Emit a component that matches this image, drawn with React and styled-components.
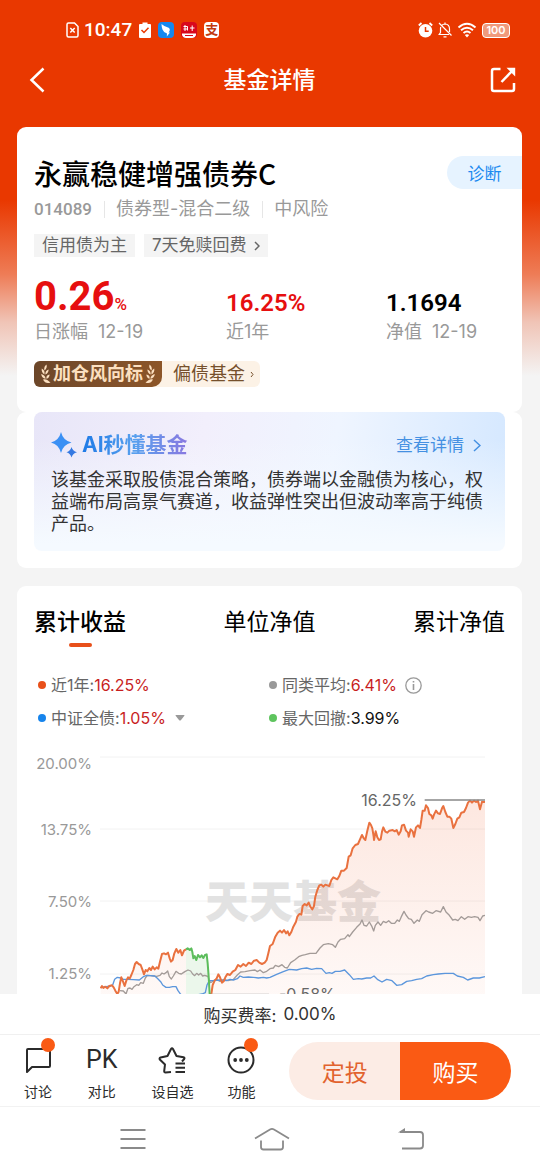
import React, { useState } from 'react';
import styled, { createGlobalStyle } from 'styled-components';

const GlobalStyle = createGlobalStyle`
  * {
    box-sizing: border-box;
  }

  body {
    margin: 0;
    background: #f4f4f4;
    color: #000;
    font-family: Inter, "Noto Sans CJK SC", sans-serif;
  }

  button {
    margin: 0;
    padding: 0;
    border: none;
    background: none;
    color: inherit;
    font: inherit;
    cursor: pointer;
  }

  svg {
    display: block;
    flex-shrink: 0;
  }
`;

const Screen = styled.div`
  height: 100vh;
  display: flex;
  flex-direction: column;
`;

const Scroller = styled.main`
  flex: 1;
  min-height: 0;
  overflow-y: auto;
  scrollbar-width: none;
  background: linear-gradient(#e93800 200px, #ee7c56 274px, #f0c4b6 322px, #f4f4f4 376px);
`;

const StatusBar = styled.div`
  height: 60px;
  padding: 0 30px 0 66px;
  display: flex;
  align-items: center;
  justify-content: space-between;
  color: #fff;
`;

const StatusGroup = styled.div`
  display: flex;
  align-items: center;
  gap: ${props => props.gap}px;
`;

const Clock = styled.span`
  font-family: Roboto, sans-serif;
  font-size: 19px;
  font-weight: 500;
  line-height: 24px;
`;

const AppBadge = styled.span`
  width: 15px;
  height: 16px;
  border-radius: 4px;
  background: #fff;
  color: #c23a10;
  font-size: 13px;
  font-weight: 700;
  line-height: 15px;
  text-align: center;
`;

const Battery = styled.span`
  width: 28px;
  height: 15px;
  border: 1px solid #fff;
  border-radius: 4px;
  background: #f09a7c;
  font-size: 11px;
  font-weight: 600;
  line-height: 13px;
  text-align: center;
`;

const NavBar = styled.header`
  height: 40px;
  padding: 0 24px 0 29px;
  display: flex;
  align-items: center;
  justify-content: space-between;
  color: #fff;
`;

const BackButton = styled.button`
  width: 20px;
`;

const NavTitle = styled.h1`
  margin: 0;
  font-size: 23px;
  font-weight: 500;
  line-height: 32px;
`;

const Content = styled.div`
  padding: 27px 18px 0 17px;
`;

const Card = styled.section`
  margin-bottom: ${props => props.spaced ? '18px' : '0'};
  padding: ${props => props.padding};
  border-radius: 9px;
  background: #fff;
`;

const TitleRow = styled.div`
  display: flex;
  align-items: center;
  justify-content: space-between;
`;

const FundName = styled.h2`
  margin: 0;
  font-family: "Noto Sans CJK SC", sans-serif;
  font-size: 28px;
  font-weight: 500;
  line-height: 32px;
`;

const DiagnoseButton = styled.button`
  width: 75px;
  height: 33px;
  margin-right: -17px;
  border-radius: 17px 0 0 17px;
  background: #e6f3ff;
  color: #1c8af0;
  font-size: 17px;
`;

const MetaRow = styled.div`
  margin-top: 8px;
  display: flex;
  align-items: center;
  color: #999;
  font-size: 18px;
  line-height: 24px;

  span + span {
    position: relative;
    margin-left: 24px;
  }

  span + span::before {
    content: '';
    position: absolute;
    left: -12px;
    top: 4px;
    width: 1px;
    height: 17px;
    background: #e6e6e6;
  }
`;

const FundCode = styled.span`
  font-family: Roboto, sans-serif;
  font-size: 17px;
  font-weight: 500;
`;

const TagRow = styled.div`
  margin-top: 13px;
  display: flex;
  gap: 9px;
`;

const Tag = styled.span`
  height: 23px;
  padding: 0 8px;
  display: flex;
  align-items: center;
  gap: 7px;
  background: #f4f4f4;
  color: #666;
  font-size: 17px;
  line-height: 23px;
`;

const Stats = styled.div`
  margin-top: 16px;
  display: grid;
  grid-template-columns: 192fr 160fr 119fr;
  align-items: end;
`;

const StatValue = styled.div`
  color: ${props => props.rising ? '#e60f0f' : '#000'};
  font-family: Roboto, sans-serif;
  font-size: ${props => props.large ? 40 : 24}px;
  font-weight: ${props => props.large ? 700 : 600};
  line-height: ${props => props.large ? 48 : 36}px;

  small {
    font-size: 17px;
    font-weight: 500;
    line-height: 17px;
  }
`;

const StatLabel = styled.div`
  display: flex;
  gap: 10px;
  color: #999;
  font-size: 18px;
  line-height: 22px;
  white-space: nowrap;
`;

const Indicator = styled.a`
  margin-top: 18px;
  display: inline-flex;
  border-radius: 6px;
  overflow: hidden;
  background: #fcf2e6;
  color: #76502c;
  font-size: 18px;
  line-height: 26px;
  text-decoration: none;
`;

const IndicatorName = styled.span`
  padding: 0 7px;
  display: flex;
  align-items: center;
  gap: 2px;
  border-radius: 0 0 10px 0;
  background: linear-gradient(100deg, #6b4629, #7d4f2b 50%, #8d5628);
  color: #fce0c0;
  font-weight: 700;
`;

const IndicatorValue = styled.span`
  padding: 0 6px 0 11px;
  display: flex;
  align-items: center;
  gap: 5px;
`;

const AiPanel = styled.div`
  padding: 19px 9px 16px 17px;
  border-radius: 8px;
  background:
    linear-gradient(to bottom, rgba(247, 251, 255, 0) 20%, #f5faff 95%),
    linear-gradient(100deg, #e8e6f8, #f2effc 35%, #eff5ff 62%, #d3e7ff);
`;

const AiHeader = styled.div`
  display: flex;
  align-items: center;
  justify-content: space-between;
`;

const AiTitle = styled.h3`
  margin: 0;
  display: flex;
  align-items: center;
  gap: 5px;
  font-size: 21px;
  font-weight: 700;
  line-height: 28px;

  span {
    background: linear-gradient(90deg, #1e7ae6, #58a0ee 50%, #8a78e0);
    background-clip: text;
    color: transparent;
  }
`;

const DetailLink = styled.a`
  margin-right: 15px;
  display: flex;
  align-items: center;
  gap: 9px;
  color: #4490e2;
  font-size: 17px;
  line-height: 24px;
  text-decoration: none;
`;

const AiText = styled.p`
  margin: 10px 0 0;
  color: #333;
  font-size: 18px;
  line-height: 22px;
`;

const Tabs = styled.div`
  display: flex;
  justify-content: space-between;
`;

const TabButton = styled.button`
  display: flex;
  flex-direction: column;
  align-items: center;
  font-size: 23px;
  font-weight: ${props => props.active ? 500 : 400};
  line-height: 32px;

  &::after {
    content: '';
    width: 23px;
    height: 4px;
    margin-top: 5px;
    border-radius: 2px;
    background: ${props => props.active ? '#e8501a' : 'transparent'};
  }
`;

const Legend = styled.div`
  margin: 26px 0 0 4px;
  display: grid;
  grid-template-columns: 231fr 236fr;
  row-gap: 9px;
`;

const LegendItem = styled.div`
  display: flex;
  align-items: center;
  color: #666;
  font-size: 16px;
  line-height: 24px;

  &::before {
    content: '';
    width: 8px;
    height: 8px;
    margin-right: 5px;
    border-radius: 50%;
    background: ${props => props.dot};
  }

  svg {
    margin-left: 8px;
  }
`;

const LegendValue = styled.span`
  color: ${props => props.rising ? '#c81e1e' : '#111'};
`;

const ChartSvg = styled.svg`
  width: 100%;
  height: auto;
  margin-top: 15px;
  font-family: Inter, "Noto Sans CJK SC", sans-serif;
`;

const Footer = styled.footer`
  background: #fff;
`;

const FeeRow = styled.div`
  height: 40px;
  display: flex;
  align-items: center;
  justify-content: center;
  gap: 7px;
  color: #333;
  font-size: 17px;
`;

const ActionBar = styled.div`
  height: 72px;
  padding: 0 29px 0 24px;
  display: flex;
  align-items: center;
  gap: 34px;
  border-top: 1px solid #f0f0f0;
`;

const ToolButton = styled.button`
  position: relative;
  padding-top: 6px;
  display: flex;
  flex-direction: column;
  align-items: center;
  gap: 8px;
  color: #2b2b2b;
  font-size: 14px;
  line-height: 20px;
  white-space: nowrap;
`;

const PkMark = styled.span`
  height: 28px;
  font-family: Roboto, sans-serif;
  font-size: 25px;
  line-height: 28px;
`;

const Dot = styled.i`
  position: absolute;
  top: -2px;
  right: -3px;
  width: 14px;
  height: 14px;
  border-radius: 50%;
  background: #fa5a14;
`;

const TradeButtons = styled.div`
  flex: 1;
  height: 58px;
  display: flex;
  border-radius: 29px;
  overflow: hidden;
`;

const TradeButton = styled.button`
  flex: 1;
  background: ${props => props.primary ? '#fa5a14' : '#fcece5'};
  color: ${props => props.primary ? '#fff' : '#e2622e'};
  font-size: 23px;
`;

const SystemNav = styled.nav`
  height: 64px;
  padding: 0 60px 0 64px;
  display: grid;
  grid-template-columns: repeat(3, 1fr);
  align-items: center;
  justify-items: center;
  border-top: 1px solid #f2f2f2;
`;

const Chevron = ({ width, height, stroke = 1.5 }) => (
  <svg width={width} height={height} viewBox={`0 0 ${width} ${height}`} fill="none" stroke="currentColor" strokeWidth={stroke}>
    <path d={`M1 1 L${width - 1} ${height / 2} L1 ${height - 1}`} />
  </svg>
);

const Laurel = ({ flip }) => (
  <svg width="10" height="20" viewBox="0 0 10 20" fill="#fce0c0">
    <g transform={flip ? 'translate(10 0) scale(-1 1)' : undefined}>
      <path d="M5.500 .5 Q2.500 2.500 3.400 6.500 Q6.600 4 5.500 .5Z" />
      <path d="M.8 4.500 Q0 8 3.400 10.500 Q4.400 6.500 .8 4.500Z" />
      <path d="M.2 10 Q.6 14 4.600 14.800 Q4.200 11 .2 10Z" />
      <path d="M2 15.500 Q5 14 9.500 18.500 Q4.500 20.500 2 15.500Z" />
      <path d="M7.600 5.500 Q4.200 6.500 4.300 10.500 Q7.600 9 7.600 5.500Z" />
      <path d="M8.600 10.500 Q5 11 5.400 14.800 Q8.600 14 8.600 10.500Z" />
    </g>
  </svg>
);

const RETURN_BEFORE = '302,745 306,738 310,744 316,740 322,745 328,738 336,736 341,742 346,752 352,762 356,755 360,730 364,712 368,722 374,738 379,722 384,712 389,716 394,705 400,690 405,672 410,666 416,672 422,675 427,688 432,703 437,690 442,694 448,684 453,690 458,680 464,688 470,682 475,686 480,665 486,642 492,640 498,643 504,638 509,655 513,665 518,660 523,640 529,627 535,638 541,630 546,646 552,632 558,628';
const DRAWDOWN = '558,628 563,625 569,630 574,625 577,636 580,655 584,648 589,660 594,645 600,652 605,646 610,654 615,645 620,643 623,670 626,710 629,762';
const RETURN_AFTER = '629,762 634,762 638,735 644,722 650,715 655,703 660,712 666,728 671,724 676,712 682,702 690,705 698,695 706,690 714,675 722,680 730,672 738,678 746,668 754,672 762,662 770,660 778,668 786,672 794,668 800,660 805,640 810,618 818,612 826,590 833,578 840,572 846,578 852,570 858,580 863,574 868,586 874,576 880,560 888,545 892,530 898,522 904,524 908,498 914,492 920,496 926,488 931,500 937,508 942,498 946,470 952,450 958,436 964,434 970,440 976,434 982,436 988,438 994,420 1000,412 1006,415 1012,418 1018,408 1024,392 1032,392 1040,384 1046,350 1052,346 1058,325 1066,315 1074,312 1080,298 1086,285 1092,296 1096,300 1102,272 1108,248 1113,255 1117,265 1121,290 1122,300 1127,274 1132,292 1137,300 1142,298 1146,275 1150,262 1156,275 1162,278 1168,272 1178,270 1184,274 1190,270 1196,284 1202,274 1206,256 1212,254 1218,272 1224,278 1226,290 1232,268 1238,274 1242,290 1248,262 1254,256 1260,264 1264,240 1268,212 1274,212 1278,196 1284,204 1288,222 1294,226 1298,236 1302,224 1308,212 1314,220 1320,222 1326,205 1330,198 1336,216 1342,230 1348,230 1354,236 1360,264 1366,252 1372,236 1378,232 1384,218 1392,216 1398,204 1404,188 1410,182 1416,188 1422,182 1428,186 1434,182 1440,208 1446,185 1455,186';
const PEERS = '360,752 370,753 378,762 384,745 390,744 396,748 402,740 410,734 416,736 422,728 430,730 436,714 442,706 450,707 460,708 470,709 480,706 486,699 492,702 498,698 503,693 508,710 514,717 520,708 528,694 536,700 544,702 550,698 556,694 564,690 572,693 578,702 584,707 590,700 596,705 602,700 608,708 614,706 620,708 624,709 627,720 632,728 640,722 650,718 660,724 672,718 684,722 700,718 712,705 722,696 735,695 750,692 765,690 772,695 780,690 790,698 800,694 810,686 820,684 826,676 836,680 846,674 854,682 862,684 872,668 884,660 896,650 906,646 916,644 930,640 948,640 960,624 970,614 985,611 998,614 1006,622 1014,606 1022,598 1034,596 1044,584 1048,590 1058,576 1070,562 1080,552 1086,540 1092,556 1100,558 1108,546 1116,560 1121,573 1126,556 1134,546 1142,556 1150,544 1158,548 1166,542 1174,550 1184,550 1192,540 1198,544 1204,530 1212,514 1218,525 1226,536 1234,538 1242,550 1252,540 1258,544 1266,524 1278,512 1286,516 1298,520 1308,512 1322,516 1330,500 1338,516 1348,526 1358,540 1366,538 1374,542 1384,530 1394,538 1404,530 1414,532 1424,530 1434,532 1440,542 1448,528 1455,526';
const BOND_INDEX = '302,742 318,740 332,738 338,735 344,718 352,712 362,714 370,718 382,718 400,719 418,720 430,710 440,706 452,707 464,708 472,715 482,725 488,735 498,742 508,742 518,740 528,740 534,752 542,763 560,780 590,765 606,762 616,758 621,735 628,722 640,722 660,720 680,722 690,718 700,720 712,716 720,708 730,712 745,711 760,712 775,714 790,712 800,714 810,712 830,703 850,695 868,688 890,690 905,686 920,684 935,688 950,685 965,686 978,700 988,698 996,700 1006,694 1020,694 1034,690 1048,704 1060,718 1075,716 1085,717 1100,714 1112,714 1122,708 1132,718 1146,726 1160,718 1176,722 1190,736 1205,734 1220,724 1235,722 1250,718 1265,716 1280,708 1300,704 1315,702 1335,700 1360,700 1372,708 1390,712 1403,720 1420,714 1438,714 1455,710';

const AXIS = [
  { label: '20.00%', line: 12, text: 24 },
  { label: '13.75%', line: 84, text: 90 },
  { label: '7.50%', line: 156, text: 162 },
  { label: '1.25%', line: 229, text: 234 },
];

function ReturnChart() {
  return (
    <ChartSvg viewBox="0 0 471 280" role="img" aria-label="累计收益">
      <defs>
        <linearGradient id="gain" x1="0" y1="180" x2="0" y2="780" gradientUnits="userSpaceOnUse">
          <stop offset="0" stopColor="#f26a3c" stopOpacity="0.16" />
          <stop offset="1" stopColor="#f26a3c" stopOpacity="0.04" />
        </linearGradient>
      </defs>
      {AXIS.map(tick => (
        <g key={tick.label}>
          <line x1="66" x2="451" y1={tick.line} y2={tick.line} stroke="#f2f2f2" />
          <text x="58" y={tick.text} fill="#999" fontSize="15" textAnchor="end">{tick.label}</text>
        </g>
      ))}
      <text x="171" y="173" fill="#e2e2e2" fontSize="44" fontWeight="900">天天基金</text>
      <svg x="66" y="-5" width="385" height="280" viewBox="300 0 1155 840" fill="none" strokeLinejoin="round">
        <polygon points={`302,840 ${RETURN_BEFORE} 558,840`} fill="url(#gain)" />
        <polygon points={`558,840 ${DRAWDOWN} 629,840`} fill="#62c462" fillOpacity="0.13" />
        <polygon points={`629,840 ${RETURN_AFTER} 1455,840`} fill="url(#gain)" />
        <polyline points={PEERS} stroke="#a39b98" strokeWidth="4" />
        <polyline points={BOND_INDEX} stroke="#5b96dc" strokeWidth="4" />
        <polyline points={RETURN_BEFORE} stroke="#e9713f" strokeWidth="6" />
        <polyline points={RETURN_AFTER} stroke="#e9713f" strokeWidth="6" />
        <polyline points={DRAWDOWN} stroke="#5cbd5c" strokeWidth="6" />
        <path d="M1274 180 H1455" stroke="#888" strokeWidth="5" />
        <path d="M632 763 H807" stroke="#aaa" strokeWidth="4" />
      </svg>
      <text x="383" y="61" fill="#666" fontSize="16" textAnchor="end">16.25%</text>
      <text x="245" y="255" fill="#666" fontSize="16">-0.58%</text>
    </ChartSvg>
  );
}

const TABS = ['累计收益', '单位净值', '累计净值'];

function App() {
  const [tab, setTab] = useState(TABS[0]);

  return (
    <Screen>
      <GlobalStyle />
      <Scroller>
        <StatusBar>
          <StatusGroup gap={7}>
            <StatusGroup gap={5}>
              <svg width="13" height="16" viewBox="0 0 13 16" fill="none" stroke="#fff" strokeWidth="1.500">
                <path d="M1 2.500 Q1 1 2.500 1 H8.500 L12 4.500 V13.500 Q12 15 10.500 15 H2.500 Q1 15 1 13.500Z" />
                <path d="M4.300 6 L8.700 10.600 M8.700 6 L4.300 10.600" />
              </svg>
              <Clock>10:47</Clock>
            </StatusGroup>
            <svg width="12" height="16" viewBox="0 0 12 16">
              <path d="M1 2 H3.500 V.5 H8.500 V2 H11 Q12 2 12 3 V15 Q12 16 11 16 H1 Q0 16 0 15 V3 Q0 2 1 2Z" fill="#fff" />
              <path d="M2.500 8 L5 10.500 L9.500 5.800" fill="none" stroke="#e93800" strokeWidth="1.500" />
            </svg>
            <StatusGroup gap={7}>
              <svg width="16" height="16" viewBox="0 0 16 16">
                <rect width="16" height="16" rx="4" fill="#1688ee" />
                <path d="M3.500 2 Q7 5 10 5.500 Q12.500 6.500 11.500 9 L10.500 10.500 H12 L8.800 14.500 L9 11.500 Q5.500 10.500 4.500 7.500 Q3.500 5 3.500 2Z" fill="#fff" />
              </svg>
              <svg width="16" height="16" viewBox="0 0 16 16">
                <rect width="16" height="16" rx="4" fill="#d9081c" />
                <path d="M2.500 4.500 H6.500 M4 3 V9 M2.500 7 H6.500 M6.500 4.500 V8.500 M9 6 H13.500 M11.200 3.500 V9" stroke="#fff" strokeWidth="1" />
                <path d="M1 11.500 H15 V13 Q14 16 11 16 H5 Q2 16 1 13Z" fill="#fff" />
                <path d="M4 13.500 H12" stroke="#d9081c" strokeWidth="1" />
              </svg>
              <AppBadge>支</AppBadge>
            </StatusGroup>
          </StatusGroup>
          <StatusGroup gap={5}>
            <svg width="15" height="16" viewBox="0 0 15 16">
              <circle cx="7.500" cy="8.700" r="6.800" fill="#fff" />
              <path d="M.8 3.500 L3.500 1 M14.200 3.500 L11.500 1" stroke="#fff" strokeWidth="1.800" />
              <path d="M7.500 5 V9.200 H10.700" fill="none" stroke="#e93800" strokeWidth="1.500" />
            </svg>
            <svg width="14" height="16" viewBox="0 0 14 16" fill="none" stroke="#fff" strokeWidth="1.200">
              <path d="M1 1 L13.500 13.500 M4 3.200 Q5 2.200 7 2 Q11.500 2.300 11.500 7 V10 M2.800 5 Q2.500 6 2.500 7 V10.500 L1.200 12.500 H11 M5.500 14.800 H8.500 M7 .5 V2" />
            </svg>
            <svg width="20" height="16" viewBox="0 0 20 16" fill="none" stroke="#fff" strokeWidth="1.900">
              <path d="M1.500 5.500 Q10 -2 18.500 5.500 M4 8.300 Q10 3 16 8.300 M6.500 11 Q10 8 13.500 11" />
              <path d="M10 15.500 L7.800 13 Q10 11.300 12.200 13Z" fill="#fff" stroke="none" />
            </svg>
            <Battery>100</Battery>
          </StatusGroup>
        </StatusBar>

        <NavBar>
          <BackButton aria-label="返回">
            <svg width="16" height="26" viewBox="0 0 16 26" fill="none" stroke="currentColor" strokeWidth="2.500">
              <path d="M14.500 1.500 L2.500 13 L14.500 24.500" />
            </svg>
          </BackButton>
          <NavTitle>基金详情</NavTitle>
          <button aria-label="分享">
            <svg width="26" height="26" viewBox="0 0 26 26" fill="none" stroke="currentColor" strokeWidth="2.500">
              <path d="M10.500 2 H4 Q2 2 2 4 V22 Q2 24 4 24 H22 Q24 24 24 22 V16" />
              <path d="M11.500 15 L23.500 2.500" />
              <path d="M16.500 .8 H25.200 V9.500 Z" fill="currentColor" stroke="none" />
            </svg>
          </button>
        </NavBar>

        <Content>
          <Card padding="29px 17px 24px">
            <TitleRow>
              <FundName>永赢稳健增强债券C</FundName>
              <DiagnoseButton>诊断</DiagnoseButton>
            </TitleRow>
            <MetaRow>
              <FundCode>014089</FundCode>
              <span>债券型-混合二级</span>
              <span>中风险</span>
            </MetaRow>
            <TagRow>
              <Tag>信用债为主</Tag>
              <Tag>
                7天免赎回费
                <Chevron width={6} height={10} />
              </Tag>
            </TagRow>
            <Stats>
              <div>
                <StatValue rising large>0.26<small>%</small></StatValue>
                <StatLabel><span>日涨幅</span><span>12-19</span></StatLabel>
              </div>
              <div>
                <StatValue rising>16.25%</StatValue>
                <StatLabel>近1年</StatLabel>
              </div>
              <div>
                <StatValue>1.1694</StatValue>
                <StatLabel><span>净值</span><span>12-19</span></StatLabel>
              </div>
            </Stats>
            <Indicator href="#indicator">
              <IndicatorName>
                <Laurel />
                加仓风向标
                <Laurel flip />
              </IndicatorName>
              <IndicatorValue>
                偏债基金
                <Chevron width={4} height={7} stroke={1} />
              </IndicatorValue>
            </Indicator>
          </Card>

          <Card spaced padding="0 17px 17px">
            <AiPanel>
              <AiHeader>
                <AiTitle>
                  <svg width="26" height="26" viewBox="0 0 26 26" fill="#3b90f4">
                    <path d="M10 0 Q12 8.500 20.500 10.500 Q12 12.500 10 21 Q8 12.500 0 10.500 Q8 8.500 10 0Z" />
                    <path d="M20.500 15 Q21.500 19 26 20.200 Q21.500 21.400 20.500 25.500 Q19.500 21.400 15.500 20.200 Q19.500 19 20.500 15Z" fill="#3579e2" />
                  </svg>
                  <span>AI秒懂基金</span>
                </AiTitle>
                <DetailLink href="#detail">
                  查看详情
                  <Chevron width={8} height={13} />
                </DetailLink>
              </AiHeader>
              <AiText>
                该基金采取股债混合策略，债券端以金融债为核心，权益端布局高景气赛道，收益弹性突出但波动率高于纯债产品。
              </AiText>
            </AiPanel>
          </Card>

          <Card padding="20px 17px 20px">
            <Tabs>
              {TABS.map(name => (
                <TabButton key={name} active={tab === name} onClick={() => setTab(name)}>
                  {name}
                </TabButton>
              ))}
            </Tabs>
            <Legend>
              <LegendItem dot="#e8501a">近1年:<LegendValue rising>16.25%</LegendValue></LegendItem>
              <LegendItem dot="#999">
                同类平均:<LegendValue rising>6.41%</LegendValue>
                <svg width="17" height="17" viewBox="0 0 17 17" fill="none" stroke="#999" strokeWidth="1.300">
                  <circle cx="8.500" cy="8.500" r="7.700" />
                  <path d="M8.500 7 V13 M8.500 4 V5.600" strokeWidth="1.600" />
                </svg>
              </LegendItem>
              <LegendItem dot="#1684ec">
                中证全债:<LegendValue rising>1.05%</LegendValue>
                <svg width="12" height="6" viewBox="0 0 12 6" fill="#999">
                  <path d="M2 0 H10 Q11 0 10.200 1 L6.800 5.200 Q6 6 5.200 5.200 L1.800 1 Q1 0 2 0Z" />
                </svg>
              </LegendItem>
              <LegendItem dot="#5ec45e">最大回撤:<LegendValue>3.99%</LegendValue></LegendItem>
            </Legend>
            <ReturnChart />
          </Card>
        </Content>
      </Scroller>

      <Footer>
        <FeeRow><span>购买费率:</span><span>0.00%</span></FeeRow>
        <ActionBar>
          <ToolButton>
            <svg width="28" height="28" viewBox="0 0 28 28" fill="none" stroke="currentColor" strokeWidth="2" strokeLinejoin="round">
              <path d="M3 26 V4 Q3 3 4 3 H25 Q26 3 26 4 V20 Q26 21 25 21 H8 Z" />
            </svg>
            讨论
            <Dot />
          </ToolButton>
          <ToolButton>
            <PkMark>PK</PkMark>
            对比
          </ToolButton>
          <ToolButton>
            <svg width="28" height="28" viewBox="0 0 28 28" fill="none" stroke="currentColor" strokeWidth="2" strokeLinejoin="round">
              <path d="M13 26 L7.500 26.500 Q6 26.500 6.200 25 L7 18.500 L1.800 13.500 Q1 12 2.600 11.500 L9.500 10 L13 3 Q14 1.500 15 3 L18.500 10 L25.500 11.200 Q27 11.800 26.200 13 L24 15.500" />
              <path d="M17.500 17.500 H27 M17.500 21.700 H27 M17.500 26 H27" />
            </svg>
            设自选
          </ToolButton>
          <ToolButton>
            <svg width="28" height="28" viewBox="0 0 28 28" fill="none" stroke="currentColor" strokeWidth="2">
              <circle cx="14" cy="14" r="12.500" />
              <g fill="currentColor" stroke="none">
                <circle cx="8.200" cy="14" r="1.900" />
                <circle cx="14" cy="14" r="1.900" />
                <circle cx="19.800" cy="14" r="1.900" />
              </g>
            </svg>
            功能
            <Dot />
          </ToolButton>
          <TradeButtons>
            <TradeButton>定投</TradeButton>
            <TradeButton primary>购买</TradeButton>
          </TradeButtons>
        </ActionBar>
        <SystemNav>
          <button aria-label="菜单">
            <svg width="26" height="24" viewBox="0 0 26 24" stroke="#8a8a8a" strokeWidth="2">
              <path d="M.5 3 H25.500 M.5 12 H25.500 M.5 21 H25.500" />
            </svg>
          </button>
          <button aria-label="主页">
            <svg width="36" height="24" viewBox="0 0 36 24" fill="none" stroke="#8a8a8a" strokeWidth="1.800" strokeLinejoin="round">
              <path d="M1 11.500 L16 2.500 Q18 1.400 20 2.500 L35 11.500" />
              <path d="M7 13.500 V20 Q7 22.500 9.500 22.500 H26.500 Q29 22.500 29 20 V13.500" />
            </svg>
          </button>
          <button aria-label="后退">
            <svg width="26" height="24" viewBox="0 0 26 24" fill="none" stroke="#8a8a8a" strokeWidth="1.800">
              <path d="M4 21.500 H22 Q25 21.500 25 18.500 V8 Q25 5 22 5 H2" />
              <path d="M0 5.500 L7 1 V5.500Z" fill="#8a8a8a" stroke="none" />
            </svg>
          </button>
        </SystemNav>
      </Footer>
    </Screen>
  );
}

export default App;
